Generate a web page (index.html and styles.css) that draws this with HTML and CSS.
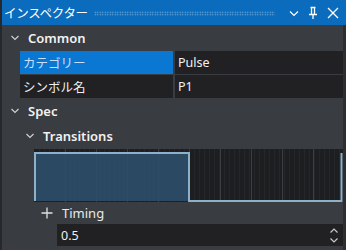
FILE: index.html
```html
<!DOCTYPE html>
<html lang="ja">
<head>
    <meta charset="UTF-8">
    <title>インスペクター</title>
    <link rel="stylesheet" href="styles.css">
</head>
<body>
    <div class="panel">
        <div class="titlebar">
            <span class="title">インスペクター</span>
            <span class="grip"></span>
            <svg class="tb-icon" width="12" height="12" viewBox="0 0 12 12"><path d="M2 4.5 L6 8.5 L10 4.5" fill="none" stroke="#fff" stroke-width="1.2"/></svg>
            <svg class="tb-icon" width="12" height="14" viewBox="0 0 12 14"><path d="M3.5 1.5 H8.5 M4.5 1.5 V8 M7.5 1.5 V8 M2 8.5 H10 M6 8.5 V13" fill="none" stroke="#fff" stroke-width="1.3"/></svg>
            <svg class="tb-icon" width="14" height="14" viewBox="0 0 14 14"><path d="M2 2 L12 12 M12 2 L2 12" fill="none" stroke="#fff" stroke-width="1.3"/></svg>
        </div>
        <div class="body">
            <div class="group">
                <svg class="chev" width="10" height="10" viewBox="0 0 10 10"><path d="M1.5 3 L5 6.5 L8.5 3" fill="none" stroke="#d0d0d0" stroke-width="1.2"/></svg>
                <span>Common</span>
            </div>
            <div class="props">
                <div class="prop">
                    <div class="prop-name selected">カテゴリー</div>
                    <div class="prop-value">Pulse</div>
                </div>
                <div class="prop">
                    <div class="prop-name">シンボル名</div>
                    <div class="prop-value">P1</div>
                </div>
            </div>
            <div class="group spec">
                <svg class="chev" width="10" height="10" viewBox="0 0 10 10"><path d="M1.5 3 L5 6.5 L8.5 3" fill="none" stroke="#d0d0d0" stroke-width="1.2"/></svg>
                <span>Spec</span>
            </div>
            <div class="group sub">
                <svg class="chev" width="10" height="10" viewBox="0 0 10 10"><path d="M1.5 3 L5 6.5 L8.5 3" fill="none" stroke="#d0d0d0" stroke-width="1.2"/></svg>
                <span>Transitions</span>
            </div>
            <div class="wave">
                <svg width="309" height="54" viewBox="0 0 309 54">
                    <rect x="1" y="4" width="154" height="48" fill="#2c4d69" fill-opacity="0.92"/>
                    <path d="M1 52 V4 H155 V52 H307.5 V4" fill="none" stroke="#8fb0c9" stroke-width="2"/>
                </svg>
            </div>
            <div class="timing">
                <svg class="plus" width="12" height="12" viewBox="0 0 12 12"><path d="M6 0.5 V11.5 M0.5 6 H11.5" fill="none" stroke="#e0e0e0" stroke-width="1.3"/></svg>
                <span>Timing</span>
            </div>
            <div class="input-row">
                <div class="num-input">
                    <span>0.5</span>
                    <div class="spin">
                        <svg width="10" height="7" viewBox="0 0 10 7"><path d="M1.5 5.5 L5 2 L8.5 5.5" fill="none" stroke="#c8c8c8" stroke-width="1.2"/></svg>
                        <svg width="10" height="7" viewBox="0 0 10 7"><path d="M1.5 1.5 L5 5 L8.5 1.5" fill="none" stroke="#c8c8c8" stroke-width="1.2"/></svg>
                    </div>
                </div>
            </div>
        </div>
    </div>
</body>
</html>
```

FILE: styles.css
```css
body {
    margin: 0;
    background-color: #2b2d31;
    font-family: "Noto Sans", "Noto Sans CJK JP", sans-serif;
    font-size: 12px;
    color: #f0f0f0;
}

.panel {
    width: 344px;
    height: 250px;
    border-left: 2px solid #26282b;
    background-color: #393c41;
    display: flex;
    flex-direction: column;
    overflow: hidden;
}

.titlebar {
    height: 25px;
    flex-shrink: 0;
    background-color: #0b6cbd;
    display: flex;
    align-items: center;
    padding: 0 6px 0 2px;
}

.title {
    font-family: "Noto Sans CJK JP", sans-serif;
    font-size: 12.5px;
    color: #fff;
    letter-spacing: -0.3px;
}

.grip {
    flex: 1;
    height: 5px;
    margin: 2px 6px 0 6px;
    background-image: radial-gradient(circle, rgba(170, 205, 235, 0.7) 0.6px, transparent 0.9px);
    background-size: 2.5px 2.5px;
}

.tb-icon {
    margin-left: 7px;
    display: block;
}

.body {
    flex: 1;
    display: flex;
    flex-direction: column;
    border-right: 3px solid #2c2e32;
}

.group {
    height: 25px;
    display: flex;
    align-items: center;
    padding-left: 8px;
    font-weight: 600;
    font-size: 13px;
    color: #f2f2f2;
    flex-shrink: 0;
}

.group .chev {
    margin-right: 8px;
}

.group.spec {
    height: 26px;
}

.group.sub {
    height: 24px;
    padding-left: 23px;
}

.props {
    display: flex;
    flex-direction: column;
    gap: 1px;
    padding-left: 18px;
    margin-top: 1px;
}

.prop {
    display: flex;
    gap: 2px;
    height: 23px;
}

.prop-name,
.prop-value {
    display: flex;
    align-items: center;
    background-color: #212123;
    padding-left: 3px;
    font-size: 12.5px;
}

.prop-name {
    width: 150px;
    font-family: "Noto Sans CJK JP", sans-serif;
    font-size: 12.5px;
}

.prop-value {
    flex: 1;
}

.prop-name.selected {
    background-color: #0a78d2;
    color: #c9defa;
}

.wave {
    height: 53px;
    margin: 1px 0 0 32px;
    flex-shrink: 0;
    background-color: #1d1e20;
    background-image:
        repeating-linear-gradient(90deg, transparent 0, transparent 30px, #3a3d42 30px, #3a3d42 31px),
        repeating-linear-gradient(90deg, transparent 0, transparent 4px, #252629 4px, #252629 5px);
    background-position: 1px 0, 1px 0;
    overflow: hidden;
}

.wave svg {
    display: block;
}

.timing {
    height: 22px;
    display: flex;
    align-items: center;
    padding-left: 39px;
    font-size: 13px;
    color: #eaeaea;
    flex-shrink: 0;
}

.plus {
    margin-right: 9px;
}

.input-row {
    padding-left: 55px;
    flex-shrink: 0;
}

.num-input {
    height: 22px;
    background-color: #212123;
    display: flex;
    align-items: center;
    padding-left: 4px;
    font-size: 12.5px;
}

.num-input span {
    flex: 1;
}

.spin {
    display: flex;
    flex-direction: column;
    gap: 3px;
    margin-right: 4px;
}

.spin svg {
    display: block;
}
```
